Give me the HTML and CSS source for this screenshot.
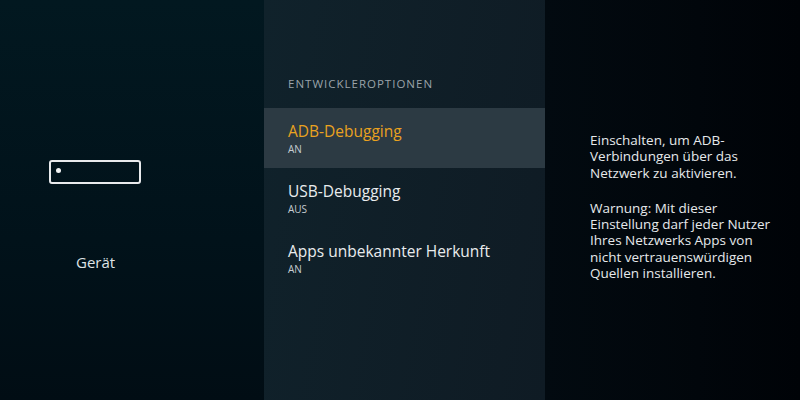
FILE: index.html
```html
<!DOCTYPE html>
<html lang="de">
<head>
    <meta charset="UTF-8">
    <title>Entwickleroptionen</title>
    <link rel="stylesheet" href="styles.css">
</head>
<body>
    <div class="screen">
        <div class="side">
            <div class="device-icon"><span class="device-dot"></span></div>
            <div class="side-label">Gerät</div>
        </div>

        <div class="menu">
            <div class="menu-title">ENTWICKLEROPTIONEN</div>
            <div class="menu-item selected">
                <div class="item-name">ADB-Debugging</div>
                <div class="item-state">AN</div>
            </div>
            <div class="menu-item">
                <div class="item-name">USB-Debugging</div>
                <div class="item-state">AUS</div>
            </div>
            <div class="menu-item">
                <div class="item-name">Apps unbekannter Herkunft</div>
                <div class="item-state">AN</div>
            </div>
        </div>

        <div class="info">
            <p>Einschalten, um ADB-<br>Verbindungen über das<br>Netzwerk zu aktivieren.</p>
            <p>Warnung: Mit dieser<br>Einstellung darf jeder Nutzer<br>Ihres Netzwerks Apps von<br>nicht vertrauenswürdigen<br>Quellen installieren.</p>
        </div>
    </div>
</body>
</html>
```

FILE: styles.css
```css
html, body {
    margin: 0;
    padding: 0;
    background-color: #01070d;
}
body {
    font-family: 'Open Sans', 'Noto Sans', sans-serif;
    color: #e6e8ea;
}
.screen {
    display: flex;
    width: 800px;
    height: 400px;
    overflow: hidden;
}
.side {
    width: 264px;
    background: linear-gradient(180deg, #021820 0%, #01121a 60%, #010d14 100%);
    padding-top: 160px;
    box-sizing: border-box;
}
.device-icon {
    width: 92px;
    height: 24px;
    margin-left: 49px;
    border: 2px solid #e8eaec;
    border-radius: 3px;
    box-sizing: border-box;
    padding: 6px 0 0 5px;
}
.device-dot {
    display: block;
    width: 5px;
    height: 5px;
    border-radius: 50%;
    background-color: #f2f4f5;
}
.side-label {
    margin: 68px 0 0 76px;
    font-size: 15px;
    color: #dfe3e6;
}
.menu {
    width: 281px;
    background: linear-gradient(100deg, #10222b 0%, #0f1b24 100%);
    padding-top: 76px;
    box-sizing: border-box;
}
.menu-title {
    padding-left: 24px;
    font-size: 11.5px;
    letter-spacing: 1px;
    color: #9aa3a9;
    height: 32px;
}
.menu-item {
    height: 60px;
    padding: 12px 0 0 24px;
    box-sizing: border-box;
}
.menu-item.selected {
    background-color: #2c3a43;
}
.item-name {
    font-size: 15.5px;
    line-height: 22px;
    color: #e9ecee;
}
.selected .item-name {
    color: #eaa21f;
}
.item-state {
    font-size: 10px;
    line-height: 15px;
    color: #c5cbd0;
}
.info {
    width: 255px;
    background: linear-gradient(90deg, #020a10 0%, #01060b 60%, #000307 100%);
    padding: 132px 0 0 45px;
    box-sizing: border-box;
    font-size: 13.5px;
    line-height: 16.3px;
    color: #e6e9eb;
}
.info p {
    margin: 0 0 19px 0;
}
```
